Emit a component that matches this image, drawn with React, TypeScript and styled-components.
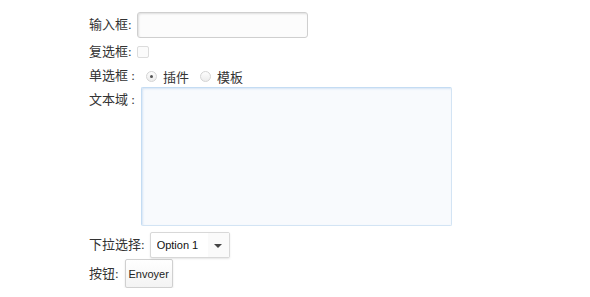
import { useState } from "react";
import styled, { createGlobalStyle } from "styled-components";

const Global = createGlobalStyle`
  html, body {
    margin: 0;
    padding: 0;
    background: #fff;
  }
`;

const Form = styled.form`
  display: flex;
  flex-direction: column;
  padding: 12px 0 0 89px;
  font-family: "Liberation Serif", "Noto Sans CJK SC", serif;
  font-size: 13px;
  color: #333;
`;

const Row = styled.div<{ $h: number; $top?: number; $align?: string }>`
  display: flex;
  align-items: ${(p) => p.$align || "center"};
  height: ${(p) => p.$h}px;
  margin-top: ${(p) => p.$top || 0}px;
`;

const Label = styled.label<{ $gap: number; $pt?: number }>`
  margin-right: ${(p) => p.$gap}px;
  padding-top: ${(p) => p.$pt || 0}px;
  white-space: nowrap;
  line-height: 16px;
`;

const TextInput = styled.input`
  box-sizing: border-box;
  width: 171px;
  height: 26px;
  border: 1px solid #cfcfcf;
  border-radius: 3px;
  background: #fcfcfc;
  box-shadow: inset 1px 1px 2px rgba(0, 0, 0, 0.12);
  outline: none;
  padding: 0 6px;
`;

const Check = styled.input`
  appearance: none;
  box-sizing: border-box;
  width: 12px;
  height: 12px;
  margin: 0 0 0 1px;
  border: 1px solid #dcdcdc;
  border-radius: 2px;
  background: #fbfbfb;
`;

const RadioItem = styled.label<{ $left?: number }>`
  display: flex;
  align-items: center;
  margin-left: ${(p) => p.$left || 0}px;
`;

const Radio = styled.input`
  appearance: none;
  box-sizing: border-box;
  width: 11px;
  height: 11px;
  margin: 0 6px 0 0;
  border: 1px solid #d4d4d4;
  border-radius: 50%;
  background: linear-gradient(#fdfdfd, #ececec);
  position: relative;
  &:checked::after {
    content: "";
    position: absolute;
    left: 3px;
    top: 3px;
    width: 3px;
    height: 3px;
    border-radius: 50%;
    background: #555;
  }
`;

const Area = styled.textarea`
  box-sizing: border-box;
  width: 311px;
  height: 139px;
  border: 1px solid #d3e4f4;
  border-top-color: #c4dcf3;
  border-left-color: #c4dcf3;
  border-radius: 2px;
  background: #f8fafd;
  box-shadow: inset 1px 1px 2px rgba(150, 190, 230, 0.35);
  outline: none;
  resize: none;
  margin: 0;
`;

const SelectWrap = styled.div`
  position: relative;
  width: 80px;
  height: 26px;
`;

const Select = styled.select`
  appearance: none;
  box-sizing: border-box;
  width: 100%;
  height: 100%;
  border: 1px solid #d8d8d8;
  border-radius: 2px;
  background: #fff;
  box-shadow: 0 1px 2px rgba(0, 0, 0, 0.1);
  font-family: "Liberation Sans", Arial, sans-serif;
  font-size: 11px;
  color: #111;
  padding: 0 0 0 6px;
  outline: none;
`;

const Arrow = styled.span`
  position: absolute;
  top: 1px;
  right: 1px;
  bottom: 1px;
  width: 21px;
  background: #fafafa;
  pointer-events: none;
  display: flex;
  align-items: center;
  justify-content: center;
  &::after {
    content: "";
    border-left: 4px solid transparent;
    border-right: 4px solid transparent;
    border-top: 4px solid #444;
    margin-top: 1px;
  }
`;

const Button = styled.button`
  box-sizing: border-box;
  width: 48px;
  height: 29px;
  padding: 0;
  border: 1px solid #d0d0d0;
  border-radius: 2px;
  background: linear-gradient(#ffffff, #f3f3f3);
  box-shadow: 0 1px 2px rgba(0, 0, 0, 0.12);
  font-family: "Liberation Sans", Arial, sans-serif;
  font-size: 11px;
  color: #222;
  cursor: pointer;
`;

export default function App() {
  const [text, setText] = useState("");
  const [choice, setChoice] = useState("plugin");

  return (
    <>
      <Global />
      <Form onSubmit={(e) => e.preventDefault()}>
        <Row $h={26}>
          <Label $gap={5}>输入框:</Label>
          <TextInput value={text} onChange={(e) => setText(e.target.value)} />
        </Row>
        <Row $h={24} $top={2}>
          <Label $gap={4}>复选框:</Label>
          <Check type="checkbox" />
        </Row>
        <Row $h={20} $top={2}>
          <Label $gap={11}>单选框 :</Label>
          <RadioItem>
            <Radio type="radio" name="kind" checked={choice === "plugin"} onChange={() => setChoice("plugin")} />
            插件
          </RadioItem>
          <RadioItem $left={11}>
            <Radio type="radio" name="kind" checked={choice === "tpl"} onChange={() => setChoice("tpl")} />
            模板
          </RadioItem>
        </Row>
        <Row $h={139} $top={1} $align="flex-start">
          <Label $gap={6} $pt={5}>文本域 :</Label>
          <Area />
        </Row>
        <Row $h={26} $top={6}>
          <Label $gap={5}>下拉选择:</Label>
          <SelectWrap>
            <Select>
              <option>Option 1</option>
              <option>Option 2</option>
            </Select>
            <Arrow />
          </SelectWrap>
        </Row>
        <Row $h={29} $top={1}>
          <Label $gap={6}>按钮:</Label>
          <Button type="submit">Envoyer</Button>
        </Row>
      </Form>
    </>
  );
}
